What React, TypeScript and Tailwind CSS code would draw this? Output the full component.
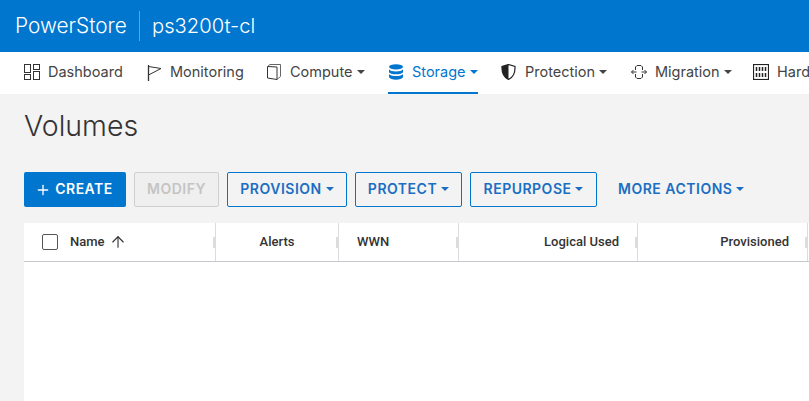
import { ArrowUp, Plus } from "lucide-react";

const Caret = () => (
  <span className="ml-[4px] inline-block h-0 w-0 border-x-[4px] border-t-[4px] border-x-transparent border-t-current" />
);

function DashboardIcon() {
  return (
    <svg width="17" height="16" viewBox="0 0 17 16" fill="none" stroke="#333" strokeWidth="1">
      <rect x="1.500" y="0.5" width="6" height="8" />
      <rect x="10.500" y="0.5" width="6" height="5" />
      <rect x="1.500" y="10.5" width="6" height="5" />
      <rect x="10.500" y="7.5" width="6" height="8" />
    </svg>
  );
}

function FlagIcon() {
  return (
    <svg width="15" height="17" viewBox="0 0 15 17" fill="none" stroke="#333" strokeWidth="1">
      <path d="M1.500 1v16" strokeWidth="1.300" />
      <path d="M1.500 2.500 14 4.500 1.500 11" />
    </svg>
  );
}

function ComputeIcon() {
  return (
    <svg width="15" height="16" viewBox="0 0 15 16" fill="none" stroke="#333" strokeWidth="1">
      <path d="M.5 2.500 10 3v12.500L.5 14z" />
      <path d="M.5 2.500 3 .5h10.500v12L10 15.500" stroke="#666" />
    </svg>
  );
}

function StorageIcon() {
  return (
    <svg width="16" height="16" viewBox="0 0 16 16" fill="#0076ce">
      <ellipse cx="8" cy="2.800" rx="7" ry="2.600" />
      <path d="M1 5.200c1 1.500 3.500 2.200 7 2.200s6-.7 7-2.200v3c-1 1.400-3.500 2.100-7 2.100s-6-.7-7-2.100z" />
      <path d="M1 10c1 1.400 3.500 2.100 7 2.100s6-.7 7-2.100v3.200c-1 1.600-3.500 2.500-7 2.500s-6-.9-7-2.500z" />
    </svg>
  );
}

function ShieldIcon() {
  return (
    <svg width="16" height="16" viewBox="0 0 16 16">
      <path d="M7.500.5 14 2.500c.3 6-1.500 10.500-6.500 13C2.500 13 .700 8.500 1 2.500z" fill="none" stroke="#222" strokeWidth="1.200" />
      <path d="M7.500.5 1 2.500c-.3 6 1.500 10.500 6.500 13z" fill="#222" />
    </svg>
  );
}

function MigrationIcon() {
  return (
    <svg width="16" height="16" viewBox="0 0 16 16" fill="none" stroke="#333" strokeWidth="1">
      <path d="M4.500 6V3l1.500-1.500h4L11.500 3v3M4.500 10v3l1.500 1.500h4l1.500-1.500v-3" />
      <path d="M.5 8h5M10.500 8h5" />
      <path d="M2.500 6 .5 8l2 2M13.500 6l2 2-2 2" />
    </svg>
  );
}

function HardwareIcon() {
  return (
    <svg width="16" height="16" viewBox="0 0 16 16" fill="none" stroke="#222" strokeWidth="1">
      <rect x="0.500" y="0.500" width="15" height="15" strokeWidth="1.200" />
      <path d="M3.500 3v4M6.500 3v4M9.500 3v4M12.500 3v4M3.500 9v4M6.500 9v4M9.500 9v4M12.500 9v4" strokeWidth="1.500" />
    </svg>
  );
}

const navItems = [
  { label: "Dashboard", icon: <DashboardIcon />, caret: false, width: "w-[124px]" },
  { label: "Monitoring", icon: <FlagIcon />, caret: false, width: "w-[120px]" },
  { label: "Compute", icon: <ComputeIcon />, caret: true, width: "w-[121px]" },
  { label: "Storage", icon: <StorageIcon />, caret: true, active: true, width: "w-[113px]" },
  { label: "Protection", icon: <ShieldIcon />, caret: true, width: "w-[130px]" },
  { label: "Migration", icon: <MigrationIcon />, caret: true, width: "w-[122px]" },
  { label: "Hardware", icon: <HardwareIcon />, caret: false, width: "w-[100px]" },
];

const outlineButtons = [
  { label: "PROVISION", width: "w-[120px]" },
  { label: "PROTECT", width: "w-[107px]" },
  { label: "REPURPOSE", width: "w-[127px]" },
];

const columns = [
  { label: "Alerts", width: "w-[123px]", align: "justify-center" },
  { label: "WWN", width: "w-[120px]", align: "justify-start pl-[18px]" },
  { label: "Logical Used", width: "w-[179px]", align: "justify-end pr-[18px]" },
  { label: "Provisioned", width: "w-[170px]", align: "justify-end pr-[18px]" },
];

const uiFont = "font-['Inter',sans-serif]";

export default function App() {
  return (
    <div className={`flex h-[401px] w-[809px] flex-col overflow-hidden bg-[#f3f3f3] ${uiFont}`}>
      {/* Header */}
      <header className="flex h-[52px] shrink-0 items-center bg-[#0076ce] pl-[15px] font-light text-white">
        <span className="w-[124px] text-[20.800px] leading-none">PowerStore</span>
        <span className="h-[30px] w-px bg-[#5aa5de]" />
        <span className="ml-[12px] text-[20.200px] leading-none">ps3200t-cl</span>
      </header>

      {/* Nav */}
      <nav className="flex h-[42px] shrink-0 items-stretch overflow-hidden bg-white pl-[23px]">
        {navItems.map((item) => (
          <div key={item.label} className={`flex shrink-0 ${item.width}`}>
            <div
              className={`flex items-center gap-[8px] border-b-2 text-[14.500px] ${
                item.active ? "border-[#0076ce] text-[#0076ce]" : "border-transparent text-[#444]"
              }`}
            >
              {item.icon}
              <span className="flex items-center whitespace-nowrap">
                {item.label}
                {item.caret && <Caret />}
              </span>
            </div>
          </div>
        ))}
      </nav>

      {/* Content */}
      <main className="flex min-h-0 flex-1 flex-col pl-[24px]">
        <h1 className="mt-[15px] text-[28.500px] leading-[34px] font-light text-[#333]">Volumes</h1>

        <div className="mt-[29px] flex h-[35px] items-stretch text-[14px] font-semibold tracking-[0.5px]">
          <button className="flex w-[102px] items-center justify-center gap-[4px] rounded-[2px] bg-[#0076ce] pr-[2px] pb-[2px] text-white">
            <Plus size={16} strokeWidth={2} className="mt-[3px]" />
            CREATE
          </button>
          <button className="ml-[8px] w-[85px] rounded-[2px] border border-[#d0d0d0] bg-[#efefef] pb-[2px] text-[#c4c4c4]">
            MODIFY
          </button>
          {outlineButtons.map((btn) => (
            <button
              key={btn.label}
              className={`ml-[8px] flex items-center justify-center rounded-[2px] border border-[#0076ce] pb-[2px] ${btn.width} text-[#1b6ec2]`}
            >
              {btn.label}
              <Caret />
            </button>
          ))}
          <button className="ml-[21px] flex items-center pb-[2px] text-[#1b6ec2]">
            MORE ACTIONS
            <Caret />
          </button>
        </div>

        <div className="mt-[16px] flex-1 bg-white">
          <div className="flex h-[39px] border-b border-[#c4c7cc] font-['Roboto',sans-serif] text-[13px] font-medium text-[#333]">
            <div className="relative flex w-[192px] shrink-0 items-center border-r border-[#dcdcdc] pl-[18px]">
              <span className="mr-[12px] h-[16px] w-[16px] rounded-[2px] border border-[#555]" />
              Name
              <ArrowUp size={18} strokeWidth={1.500} className="ml-[4px]" />
              <span className="absolute top-[14px] right-0 h-[11px] w-[2px] bg-[#dcdcdc]" />
            </div>
            {columns.map((col) => (
              <div
                key={col.label}
                className={`relative flex shrink-0 items-center border-r border-[#dcdcdc] ${col.width} ${col.align}`}
              >
                {col.label}
                <span className="absolute top-[14px] right-0 h-[11px] w-[2px] bg-[#dcdcdc]" />
              </div>
            ))}
          </div>
        </div>
      </main>
    </div>
  );
}
